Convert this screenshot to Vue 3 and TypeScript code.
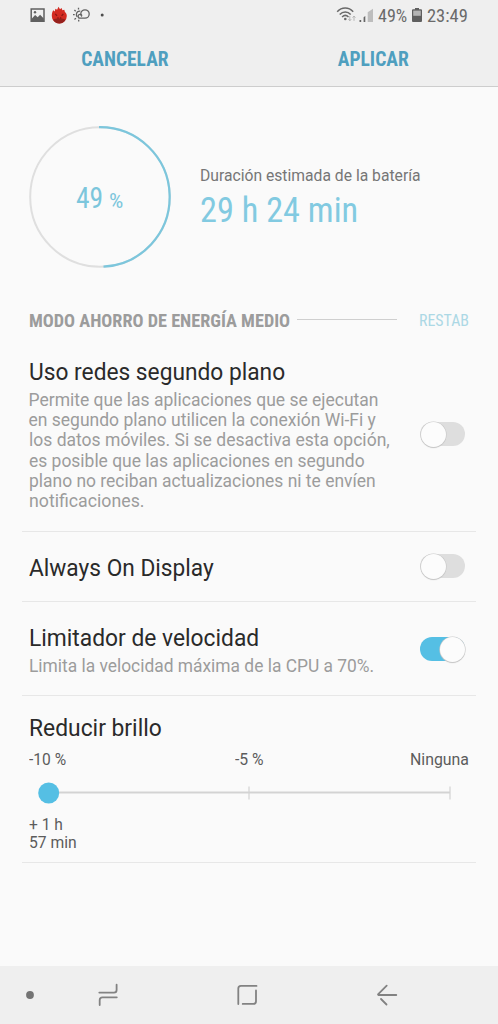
<script setup lang="ts">
import { ref } from 'vue'

interface Line { text: string; width: number }
interface Option { title: Line; lines: Line[]; on: boolean; size: string }

// Scales a label horizontally so that it occupies the given width.
const vFit = {
  mounted(el: HTMLElement, binding: { value: number }) {
    el.style.transform = `scaleX(${binding.value / el.offsetWidth})`
  },
}

const options = ref<Option[]>([
  {
    title: { text: 'Uso redes segundo plano', width: 256 },
    lines: [
      { text: 'Permite que las aplicaciones que se ejecutan', width: 350 },
      { text: 'en segundo plano utilicen la conexión Wi-Fi y', width: 347 },
      { text: 'los datos móviles. Si se desactiva esta opción,', width: 360.5 },
      { text: 'es posible que las aplicaciones en segundo', width: 336 },
      { text: 'plano no reciban actualizaciones ni te envíen', width: 347 },
      { text: 'notificaciones.', width: 115.5 },
    ],
    on: false,
    size: 'tall',
  },
  { title: { text: 'Always On Display', width: 184.5 }, lines: [], on: false, size: 'short' },
  {
    title: { text: 'Limitador de velocidad', width: 230 },
    lines: [{ text: 'Limita la velocidad máxima de la CPU a 70%.', width: 345.5 }],
    on: true,
    size: 'medium',
  },
])
</script>

<template>
  <div class="screen">
    <header class="top">
      <div class="status">
        <div class="notifications">
          <svg width="80" height="20" viewBox="0 0 80 20">
            <path d="M1.200 2.900h12.800v12.300H1.200z" fill="none" stroke="#606060" stroke-width="1.500" />
            <path d="M1.500 13l3.600-4 2.600 2.200 2.400-2.500 3.700 3.700v2.800H1.500z" fill="#606060" />
            <circle cx="5" cy="6.200" r="1.200" fill="#606060" />
            <path d="M21.800 9.800c0-2.300.5-4 1.400-5.600l1.600 1.200.6-2.700 1.700 1L28.500.8l1.500 2.400 1.600-1.300.8 2.400 1.900-.6.600 2.300c1.200 1 1.900 2.400 1.900 3.900a7.500 7.500 0 0 1-15 0z" fill="#d32b22" />
            <path d="M23 13.700c2-1.500 10.500-1.500 12.600 0-1.200 2.300-3.500 3.800-6.300 3.800s-5.100-1.500-6.300-3.800z" fill="#96211d" />
            <path d="M25.300 7.800l1.700 2M33.300 7.800l-1.700 2M28 11.300v1.500M30.600 11.300v1.500" stroke="#8a1714" stroke-width="1.300" />
            <g fill="none" stroke="#626262" stroke-width="1.300">
              <path d="M50 12.200h5a4.200 4.200 0 1 0-4.200-4.200c0 1 .4 1.800 1.100 2.500" />
              <path d="M50 12.200a1.900 1.900 0 0 1 0-3.800c1 0 1.600.4 2 1.100" />
              <path d="M50.300 5.100c-2.600-.2-4 1.600-3.900 3.600 0 1 .4 1.700.9 2.200" />
              <path d="M48.500 1.700v1.800M44.400 4l1.300 1.200M43 8.700h1.700M44.500 13.500l1.400-1.400M48.700 15.400v-1.600" />
            </g>
            <circle cx="72.200" cy="9" r="1.500" fill="#4c4c4c" />
          </svg>
        </div>
        <div class="system">
          <svg class="signal" width="38" height="20" viewBox="0 0 38 20">
            <g fill="none" stroke="#696969" stroke-width="1.500">
              <path d="M1.200 6.700c4.500-4.900 11.500-4.900 16 0" />
              <path d="M3.700 9.400c3.200-3.300 8-3.300 11 0" />
              <path d="M6.100 12c1.900-1.900 4.500-1.900 6.400 0" />
            </g>
            <circle cx="9.300" cy="14" r="1.300" fill="#696969" />
            <path d="M13.800 11v4.800m-1.400-1.600 1.400 1.600 1.400-1.600M18 15.800V11m-1.400 1.600L18 11l1.400 1.600" fill="none" stroke="#b5b5b5" stroke-width="1" />
            <path d="M23.500 15h1.700v2h-1.700zM27.600 12.200l1.700-1.100V17h-1.700z" fill="#666" />
            <path d="M31.700 7.300 37 3.800V17h-5.300z" fill="#bdbdbd" />
          </svg>
          <span v-fit="30" class="fit cond stat percent">49%</span>
          <svg class="battery" width="10" height="14" viewBox="0 0 10 14">
            <path d="M3 0h4v1.200h2q1 0 1 1V13q0 1-1 1H1q-1 0-1-1V2.200q0-1 1-1h2z" fill="#5f5f5f" />
            <path d="M1.200 2.600h7.600v5.200H1.200z" fill="#b5b5b5" />
          </svg>
          <span v-fit="39" class="fit cond stat clock">23:49</span>
        </div>
      </div>
      <div class="actions">
        <div class="action"><span v-fit="87.500" class="fit cond act">CANCELAR</span></div>
        <div class="action"><span v-fit="71.500" class="fit cond act">APLICAR</span></div>
      </div>
    </header>

    <main>
      <section class="summary">
        <div class="ring">
          <svg width="142" height="142" viewBox="0 0 142 142">
            <circle cx="71" cy="71" r="69.800" fill="none" stroke="#dfdfdf" stroke-width="2" />
            <path d="M70 1.200A69.800 69.800 0 0 1 74.500 140.700" fill="none" stroke="#7cc6dc" stroke-width="2.200" />
          </svg>
          <div class="level">
            <span v-fit="27.500" class="fit cond num">49</span>
            <span v-fit="14" class="fit cond pct">%</span>
          </div>
        </div>
        <div class="estimate">
          <div class="caption"><span v-fit="220.500" class="fit">Duración estimada de la batería</span></div>
          <div class="time"><span v-fit="158" class="fit cond">29 h 24 min</span></div>
        </div>
      </section>

      <div class="mode">
        <span v-fit="261" class="fit cond mode-name">MODO AHORRO DE ENERGÍA MEDIO</span>
        <i class="rule"></i>
        <span v-fit="50" class="fit cond reset">RESTAB</span>
      </div>

      <section v-for="o in options" :key="o.title.text" class="row" :class="o.size">
        <div class="copy">
          <div class="title"><span v-fit="o.title.width" class="fit">{{ o.title.text }}</span></div>
          <div v-for="l in o.lines" :key="l.text" class="sub"><span v-fit="l.width" class="fit">{{ l.text }}</span></div>
        </div>
        <button class="toggle" :class="{ on: o.on }" @click="o.on = !o.on"><i class="knob"></i></button>
      </section>

      <section class="row brightness">
        <div class="title"><span v-fit="133" class="fit">Reducir brillo</span></div>
        <div class="labels">
          <span v-fit="37" class="fit">-10 %</span>
          <span v-fit="28.500" class="fit">-5 %</span>
          <span v-fit="58.500" class="fit">Ninguna</span>
        </div>
        <svg class="slider" width="440" height="24" viewBox="0 0 440 24">
          <path d="M19.500 11.500H421" stroke="#d3d3d3" stroke-width="2.200" />
          <path d="M220 5.500V18.500M421 5.500V18.500" stroke="#d3d3d3" stroke-width="1.200" />
          <circle cx="19.700" cy="12" r="10.500" fill="#55bfe4" />
        </svg>
        <div class="gain"><span v-fit="34" class="fit">+ 1 h</span></div>
        <div class="gain"><span v-fit="48" class="fit">57 min</span></div>
      </section>
    </main>

    <nav class="nav">
      <svg width="498" height="58" viewBox="0 0 498 58" fill="none" stroke="#828282" stroke-width="1.800" stroke-linecap="round" stroke-linejoin="round">
        <circle cx="30" cy="29" r="3.900" fill="#747474" stroke="none" />
        <path d="M99.300 26.600H114q2.600 0 2.600-2.600v-5.300M99.700 39v-5q0-2.700 2.700-2.700h14.400" />
        <path d="M238.300 38V22.500q0-2.600 2.600-2.600h15.600M256 24.500V35.300q0 2.600-2.600 2.600h-10.700" />
        <path d="M386.700 19.700 378 28.300l.4.700H396.300M381 33l5.500 5.500" />
      </svg>
    </nav>
  </div>
</template>

<style>
body { margin: 0; background: #fafafa; }
</style>

<style scoped>
.screen { width: 498px; height: 1024px; display: flex; flex-direction: column; background: #fafafa; font-family: Roboto, "Liberation Sans", sans-serif; overflow: hidden; }
svg { display: block; flex: none; }
.fit { display: inline-block; white-space: nowrap; transform-origin: 0 50%; }
.cond { font-family: "Roboto Condensed", Roboto, sans-serif; font-stretch: 75%; }
.top { height: 86px; background: #efefef; border-bottom: 1px solid #cdcdcd; }
.status { height: 32px; display: flex; justify-content: space-between; }
.notifications { padding: 6px 0 0 30px; }
.system { width: 162px; display: flex; align-items: flex-start; }
.signal { margin-top: 5px; }
.stat { font-size: 18px; line-height: 32px; color: #6a6a6a; }
.percent { width: 30px; margin-left: 4px; }
.battery { margin: 8px 5px 0 4px; }
.clock { width: 38px; }
.actions { height: 54px; display: grid; grid-template-columns: 1fr 1fr; }
.action { display: flex; justify-content: center; }
.act { font-size: 20.5px; line-height: 54px; font-weight: 700; color: #4f9fbf; transform-origin: 50% 50%; }
.summary { height: 142px; padding: 39px 0 0 29px; display: flex; }
.ring { width: 142px; height: 142px; display: grid; }
.ring > * { grid-area: 1 / 1; }
.level { display: grid; grid-template-columns: 32.5px auto; padding: 5px 0 0 47px; align-content: center; align-items: baseline; justify-content: start; color: #7cc6dc; }
.level .fit { justify-self: start; }
.num { font-size: 29px; line-height: 36px; }
.pct { font-size: 21px; line-height: 36px; }
.estimate { padding: 40px 0 0 28.5px; }
.caption { font-size: 16.3px; line-height: 20px; color: #767676; }
.time { font-size: 34.5px; line-height: 38px; margin-top: 4.5px; color: #82cae1; }
.mode { height: 24px; margin: 40px 0 0 28.5px; display: grid; grid-template-columns: 268.5px 121.5px auto; justify-content: start; align-items: center; }
.mode .fit { justify-self: start; }
.mode-name { font-size: 18.8px; line-height: 24px; padding-top: 1px; font-weight: 700; color: #9c9c9c; }
.rule { width: 100px; height: 1px; margin-bottom: 2px; background: #cfcfcf; }
.reset { font-size: 16.5px; line-height: 24px; padding-top: 1px; color: #acd8e5; }
.row { margin: 0 22px; padding: 0 11px 0 6.5px; box-sizing: border-box; border-bottom: 1px solid #e7e7e7; display: flex; justify-content: space-between; }
.tall { height: 200px; padding-top: 27px; }
.short { height: 70px; padding-top: 23px; }
.medium { height: 94px; padding-top: 23px; }
.title { height: 28px; font-size: 23px; line-height: 28px; color: #2a2a2a; }
.title + .sub { margin-top: 2.9px; }
.sub { height: 20.3px; font-size: 17.5px; line-height: 20.3px; color: #9c9c9c; }
.toggle { width: 45px; height: 24px; padding: 0; border: 0; border-radius: 12px; background: #dedede; display: flex; align-items: center; }
.toggle.on { background: #55bfe4; justify-content: flex-end; }
.knob { width: 25px; height: 25px; flex: none; margin-left: 1px; border-radius: 50%; background: #fcfcfc; box-shadow: 0 0 0 .6px #c9c9c9, 0 1px 1px #c4c4c4; }
.tall .toggle { margin-top: 63px; }
.short .toggle { margin-top: -1px; }
.medium .toggle { margin-top: 12px; }
.brightness { height: 167px; padding: 19px 0 0 6.5px; flex-direction: column; justify-content: flex-start; }
.labels { height: 20px; margin-top: 6.5px; display: grid; grid-template-columns: 206px 175.5px auto; justify-content: start; font-size: 16px; line-height: 20px; color: #5c5c5c; }
.labels .fit { justify-self: start; }
.slider { margin-top: 11.5px; }
.gain { height: 18.5px; font-size: 16px; line-height: 19px; color: #5c5c5c; }
.slider + .gain { margin-top: 9.5px; }
.nav { margin-top: auto; height: 58px; flex: none; background: #efefef; }
</style>
